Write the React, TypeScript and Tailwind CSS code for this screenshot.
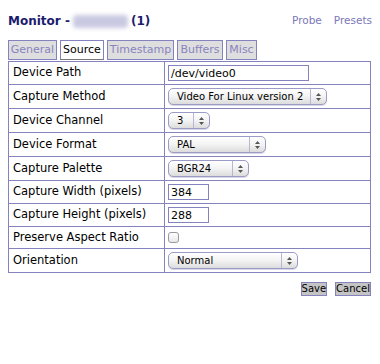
import React from "react";

const rows: { label: string; h: string; kind: string; value?: string; w?: string }[] = [
  { label: "Device Path", h: "h-[23px]", kind: "input", value: "/dev/video0", w: "w-[141px]" },
  { label: "Capture Method", h: "h-[24px]", kind: "select", value: "Video For Linux version 2", w: "w-[159px]" },
  { label: "Device Channel", h: "h-[24px]", kind: "select", value: "3", w: "w-[42px]" },
  { label: "Device Format", h: "h-[24px]", kind: "select", value: "PAL", w: "w-[98px]" },
  { label: "Capture Palette", h: "h-[24px]", kind: "select", value: "BGR24", w: "w-[81px]" },
  { label: "Capture Width (pixels)", h: "h-[23px]", kind: "input", value: "384", w: "w-[41px]" },
  { label: "Capture Height (pixels)", h: "h-[23px]", kind: "input", value: "288", w: "w-[41px]" },
  { label: "Preserve Aspect Ratio", h: "h-[22px]", kind: "check" },
  { label: "Orientation", h: "h-[24px]", kind: "select", value: "Normal", w: "w-[130px]" },
];

const tabs = [
  { name: "General", w: "w-[49px]" },
  { name: "Source", w: "w-[44px]" },
  { name: "Timestamp", w: "w-[67px]" },
  { name: "Buffers", w: "w-[46px]" },
  { name: "Misc", w: "w-[31px]" },
];

const Arrows = () => (
  <svg width="7" height="10" viewBox="0 0 7 10" className="block">
    <path d="M3.5 1 L6 4 L1 4 Z" fill="#555" />
    <path d="M3.5 9 L6 6 L1 6 Z" fill="#555" />
  </svg>
);

const FakeSelect = ({ value, w }: { value: string; w: string }) => (
  <div
    className={`${w} h-[17px] flex items-center rounded-[5px] border border-[#9c9ac6] bg-gradient-to-b from-white via-[#f3f3f3] to-[#dcdcdc] shadow-[0_1px_0_#d8d8e8]`}
  >
    <span className="flex-1 pl-[8px] text-[10px] text-black leading-none whitespace-nowrap overflow-hidden">
      {value}
    </span>
    <span className="h-full w-[16px] shrink-0 border-l border-[#b8b6d4] flex items-center justify-center">
      <Arrows />
    </span>
  </div>
);

const App = () => {
  return (
    <div className="w-[380px] h-[364px] bg-white font-['DejaVu_Sans',sans-serif] text-black">
      <div className="flex items-center justify-between pl-2 pr-2 pt-[12px]">
        <h1 className="text-[12px] font-bold text-[#1c1c6e] flex items-center">
          <span>Monitor -</span>
          {/* blurred monitor name */}
          <span className="inline-block w-[55px] h-[13px] ml-[3px] mr-[3px] rounded-[4px] bg-[#c9c9e2] blur-[2px]" />
          <span>(1)</span>
        </h1>
        <div className="flex gap-[12px] text-[10.5px] text-[#7b78b8]">
          <span>Probe</span>
          <span>Presets</span>
        </div>
      </div>

      <div className="flex gap-[3px] pl-2 mt-[10px]">
        {tabs.map((t) =>
          t.name === "Source" ? (
            <div
              key={t.name}
              className={`${t.w} h-[20px] flex items-center justify-center border border-[#8582c0] border-b-[#777] border-b-dotted bg-white text-[11px] text-black`}
            >
              {t.name}
            </div>
          ) : (
            <div
              key={t.name}
              className={`${t.w} h-[20px] flex items-center justify-center border border-[#8582c0] bg-[#dedede] text-[11px] text-[#8884bf]`}
            >
              {t.name}
            </div>
          )
        )}
      </div>

      <table className="ml-2 mt-[1px] w-[363px] border-collapse text-[11.5px]">
        <tbody>
          {rows.map((r) => (
            <tr key={r.label} className={r.h}>
              <td className="w-[156px] border border-[#8582c0] pl-[4px] p-0 align-middle whitespace-nowrap">
                {r.label}
              </td>
              <td className="border border-[#8582c0] pl-[3px] p-0 align-middle">
                {r.kind === "input" && (
                  <div
                    className={`${r.w} h-[16px] border border-[#8582c0] pl-[2px] flex items-center leading-none text-[11px]`}
                  >
                    {r.value}
                  </div>
                )}
                {r.kind === "select" && <FakeSelect value={r.value!} w={r.w!} />}
                {r.kind === "check" && (
                  <div className="w-[11px] h-[11px] rounded-[3px] border border-[#9a9a9a] bg-gradient-to-b from-white to-[#e8e8e8]" />
                )}
              </td>
            </tr>
          ))}
        </tbody>
      </table>

      <div className="flex justify-end gap-[8px] pr-[9px] mt-[9px]">
        <button className="h-[14px] px-0 border border-[#8582c0] bg-[#c4c4c4] text-[10px] leading-none text-black">
          Save
        </button>
        <button className="h-[14px] px-0 border border-[#8582c0] bg-[#c4c4c4] text-[10px] leading-none text-black">
          Cancel
        </button>
      </div>
    </div>
  );
};

export default App;
